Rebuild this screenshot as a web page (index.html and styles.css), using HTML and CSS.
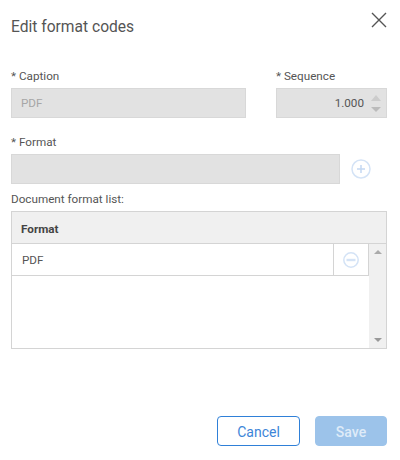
FILE: index.html
```html
<!DOCTYPE html>
<html lang="en">
<head>
    <meta charset="UTF-8">
    <title>Edit format codes</title>
    <link rel="stylesheet" href="styles.css">
</head>
<body>
    <div class="dialog">
        <!-- Title bar -->
        <div class="dialog-header">
            <h1 class="dialog-title">Edit format codes</h1>
            <svg class="close-icon" width="16" height="16" viewBox="0 0 16 16">
                <path d="M1 1L15 15M15 1L1 15" />
            </svg>
        </div>

        <!-- Caption and sequence -->
        <div class="form-row caption-row">
            <div class="field caption-field">
                <label class="field-label">* Caption</label>
                <div class="input-box">PDF</div>
            </div>
            <div class="field sequence-field">
                <label class="field-label">* Sequence</label>
                <div class="input-box number-box">
                    <span class="number-value">1.000</span>
                    <span class="spinner">
                        <span class="arrow-up"></span>
                        <span class="arrow-down"></span>
                    </span>
                </div>
            </div>
        </div>

        <!-- Format -->
        <div class="form-row format-row">
            <div class="field format-field">
                <label class="field-label">* Format</label>
                <div class="input-box"></div>
            </div>
            <svg class="round-icon add-icon" width="20" height="20" viewBox="0 0 20 20">
                <circle cx="10" cy="10" r="9" />
                <path d="M10 6V14M6 10H14" />
            </svg>
        </div>

        <!-- Document format list -->
        <div class="list-label">Document format list:</div>
        <div class="list-table">
            <div class="list-header">Format</div>
            <div class="list-body">
                <div class="list-rows">
                    <div class="list-row">
                        <div class="list-cell">PDF</div>
                        <div class="list-action">
                            <svg class="round-icon" width="16" height="16" viewBox="0 0 16 16">
                                <circle cx="8" cy="8" r="7.2" />
                                <path class="minus-bar" d="M3.5 8H12.5" />
                            </svg>
                        </div>
                    </div>
                </div>
                <div class="scrollbar">
                    <span class="scroll-up"></span>
                    <span class="scroll-down"></span>
                </div>
            </div>
        </div>

        <!-- Buttons -->
        <div class="dialog-footer">
            <button class="btn btn-cancel">Cancel</button>
            <button class="btn btn-save">Save</button>
        </div>
    </div>
</body>
</html>
```

FILE: styles.css
```css
/* Page */
body {
    margin: 0;
    background-color: #fff;
    font-family: Roboto, "Liberation Sans", sans-serif;
    font-size: 11.7px;
    color: #555;
}

.dialog {
    width: 400px;
    height: 460px;
    box-sizing: border-box;
    padding: 12px 13px 0 11px;
}

/* Title bar */
.dialog-header {
    display: flex;
    justify-content: space-between;
    align-items: flex-start;
    height: 58px;
}

.dialog-title {
    margin: 6px 0 0;
    font-size: 15.6px;
    font-weight: 400;
    line-height: 19px;
    color: #555;
}

.close-icon {
    margin: 0;
    fill: none;
    stroke: #555;
    stroke-width: 1.4;
}

/* Form rows */
.form-row {
    display: flex;
}

.caption-row {
    justify-content: space-between;
    height: 49px;
}

.format-row {
    align-items: flex-end;
    height: 65px;
}

.field-label {
    display: block;
    height: 18px;
    margin-bottom: 0;
    line-height: 12px;
}

.caption-field {
    width: 235px;
}

.sequence-field {
    width: 111px;
}

.format-field {
    width: 329px;
}

.input-box {
    box-sizing: border-box;
    height: 30px;
    padding: 0 9px;
    border: 1px solid #d8d8d8;
    background-color: #e2e2e2;
    line-height: 28px;
    color: #a6a6a6;
}

/* Number input */
.number-box {
    display: flex;
    justify-content: flex-end;
    align-items: center;
    padding: 0 5px 0 0;
    color: #555;
}

.spinner {
    display: flex;
    flex-direction: column;
    gap: 6px;
    margin-left: 7px;
}

.arrow-up {
    border-left: 5px solid transparent;
    border-right: 5px solid transparent;
    border-bottom: 6px solid #ccc;
}

.arrow-down {
    border-left: 5px solid transparent;
    border-right: 5px solid transparent;
    border-top: 5px solid #bbb;
}

/* Round add and remove icons */
.round-icon {
    fill: none;
    stroke: #d4e3f6;
    stroke-width: 1.5;
}

.add-icon {
    margin: 0 0 5px 11px;
}

.add-icon path {
    stroke: #c4d8f2;
}

.minus-bar {
    stroke-width: 2.4;
}

/* Document format list */
.list-label {
    height: 18px;
    margin-top: 6px;
    line-height: 18px;
}

.list-table {
    box-sizing: border-box;
    width: 376px;
    height: 138px;
    margin-top: 3px;
    border: 1px solid #d4d4d4;
}

.list-header {
    box-sizing: border-box;
    height: 32px;
    padding-left: 9px;
    border-bottom: 1px solid #d4d4d4;
    background-color: #f0f0f0;
    font-weight: 700;
    line-height: 35px;
    color: #444;
}

.list-body {
    display: flex;
    height: 104px;
}

.list-rows {
    flex: 1;
}

.list-row {
    display: flex;
    height: 31px;
    border-bottom: 1px solid #d4d4d4;
    border-right: 1px solid #d4d4d4;
}

.list-cell {
    flex: 1;
    padding-left: 10px;
    line-height: 33px;
}

.list-action {
    display: flex;
    justify-content: center;
    align-items: center;
    width: 34px;
    border-left: 1px solid #d4d4d4;
}

/* Table scrollbar */
.scrollbar {
    display: flex;
    flex-direction: column;
    justify-content: space-between;
    align-items: center;
    box-sizing: border-box;
    width: 17px;
    padding: 6px 0 6px;
    background-color: #f0f0f0;
}

.scroll-up {
    border-left: 4px solid transparent;
    border-right: 4px solid transparent;
    border-bottom: 4px solid #aaa;
}

.scroll-down {
    border-left: 4px solid transparent;
    border-right: 4px solid transparent;
    border-top: 4px solid #999;
}

/* Buttons */
.dialog-footer {
    display: flex;
    justify-content: flex-end;
    gap: 15px;
    margin-top: 67px;
}

.btn {
    box-sizing: border-box;
    height: 30px;
    padding-top: 2px;
    border-radius: 4px;
    font-family: Roboto, "Liberation Sans", sans-serif;
    font-size: 14px;
    font-weight: 500;
}

.btn-cancel {
    width: 83px;
    border: 1px solid #2f80d8;
    background-color: #fff;
    color: #3d85d8;
    font-weight: 400;
}

.btn-save {
    width: 72px;
    border: 1px solid #9cc3ea;
    background-color: #9cc3ea;
    color: #dfebf8;
}
```
